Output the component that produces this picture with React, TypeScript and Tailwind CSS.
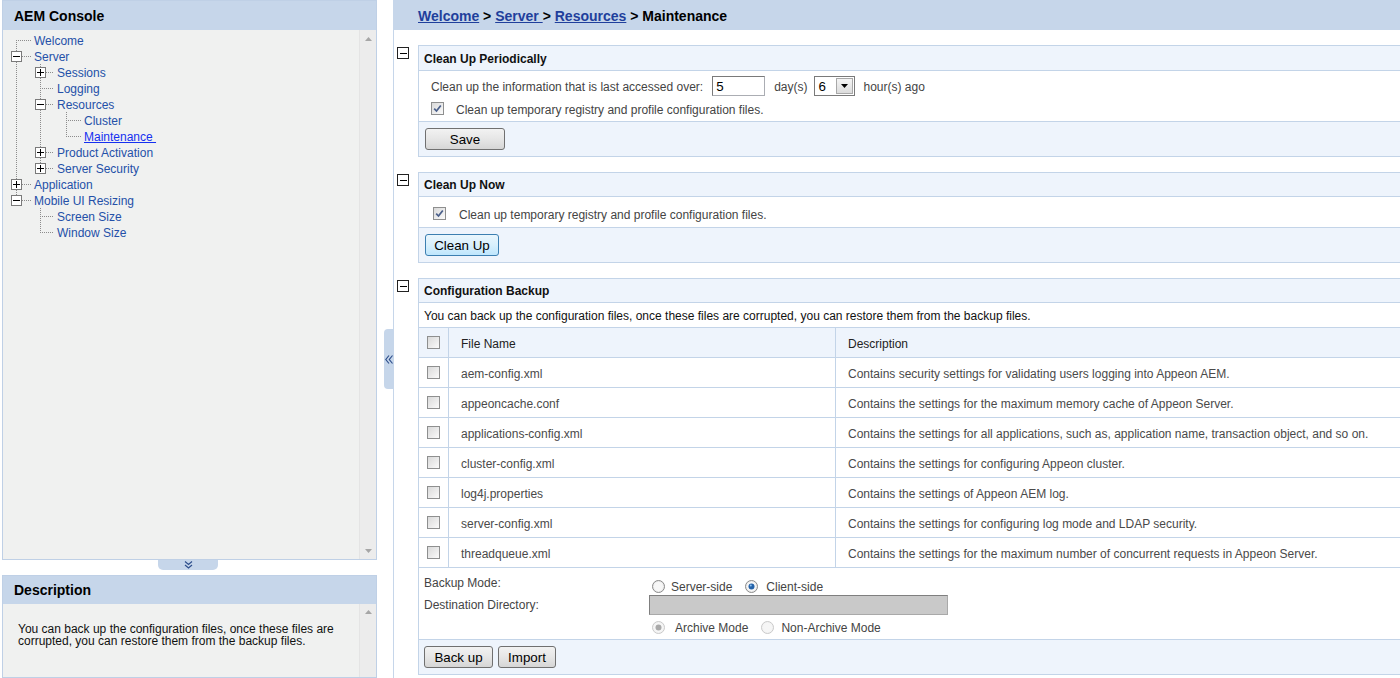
import React from 'react';

type Node = {
  label: string;
  level: number;
  toggle: '+' | '-' | null;
  last: boolean;
  guides: boolean[];
  first?: boolean;
  active?: boolean;
};

const TREE: Node[] = [
  { label: 'Welcome', level: 0, toggle: null, last: false, guides: [], first: true },
  { label: 'Server', level: 0, toggle: '-', last: false, guides: [] },
  { label: 'Sessions', level: 1, toggle: '+', last: false, guides: [true] },
  { label: 'Logging', level: 1, toggle: null, last: false, guides: [true] },
  { label: 'Resources', level: 1, toggle: '-', last: false, guides: [true] },
  { label: 'Cluster', level: 2, toggle: null, last: false, guides: [true, true] },
  { label: 'Maintenance ', level: 2, toggle: null, last: true, guides: [true, true], active: true },
  { label: 'Product Activation', level: 1, toggle: '+', last: false, guides: [true] },
  { label: 'Server Security', level: 1, toggle: '+', last: true, guides: [true] },
  { label: 'Application', level: 0, toggle: '+', last: false, guides: [] },
  { label: 'Mobile UI Resizing', level: 0, toggle: '-', last: true, guides: [] },
  { label: 'Screen Size', level: 1, toggle: null, last: false, guides: [false] },
  { label: 'Window Size', level: 1, toggle: null, last: true, guides: [false] },
];

const CX = [13, 37, 63];
const TX = [31, 54, 81];
const DOT = '#8c8c8c';

function TreeRow({ n }: { n: Node }) {
  const w = TX[n.level];
  const c = CX[n.level];
  return (
    <div className="flex h-[16px] items-center">
      <svg width={w} height={16} className="shrink-0" shapeRendering="crispEdges">
        {n.guides.map((g, i) =>
          g ? (
            <line key={i} x1={CX[i] + 0.5} y1={0} x2={CX[i] + 0.5} y2={16} stroke={DOT} strokeDasharray="1 1" />
          ) : null
        )}
        <line x1={c + 0.5} y1={n.first ? 8 : 0} x2={c + 0.5} y2={n.last ? 8 : 16} stroke={DOT} strokeDasharray="1 1" />
        <line x1={c} y1={8.5} x2={w - 3} y2={8.5} stroke={DOT} strokeDasharray="1 1" />
        {n.toggle && (
          <g>
            <rect x={c - 5 + 0.5} y={3.5} width={10} height={10} fill="#ffffff" stroke="#7a7a7a" />
            <line x1={c - 3} y1={8.5} x2={c + 4} y2={8.5} stroke="#000" />
            {n.toggle === '+' && <line x1={c + 0.5} y1={5} x2={c + 0.5} y2={12} stroke="#000" />}
          </g>
        )}
      </svg>
      <span
        className={
          n.active
            ? 'whitespace-pre pt-[1px] leading-[16px] text-[#1530f0] underline'
            : 'whitespace-pre pt-[1px] leading-[16px] text-[#2450a8]'
        }
      >
        {n.label}
      </span>
    </div>
  );
}

function Scrollbar({ down }: { down: boolean }) {
  return (
    <div className="flex w-[17px] shrink-0 flex-col items-center justify-between border-l border-[#e4e4e4] bg-[#ececec] pb-[6px] pt-[7px]">
      <svg width="7" height="4" viewBox="0 0 7 4">
        <path d="M0 4 L3.5 0 L7 4 Z" fill="#a6a6a6" />
      </svg>
      {down && (
        <svg width="7" height="4" viewBox="0 0 7 4">
          <path d="M0 0 L3.5 4 L7 0 Z" fill="#a6a6a6" />
        </svg>
      )}
    </div>
  );
}

function MinusBox() {
  return (
    <svg width="12" height="12" viewBox="0 0 12 12" shapeRendering="crispEdges">
      <rect x="0.5" y="0.5" width="11" height="11" fill="#fff" stroke="#222" />
      <line x1="3" y1="6.5" x2="10" y2="6.5" stroke="#000" />
    </svg>
  );
}

function Check({ checked = false }: { checked?: boolean }) {
  return (
    <span className="inline-flex h-[13px] w-[13px] shrink-0 items-center justify-center border border-[#8e8f8f] bg-gradient-to-br from-[#d9d9d9] to-[#fbfbfb]">
      {checked && (
        <svg width="9" height="9" viewBox="0 0 9 9">
          <path d="M1.2 4.6 L3.5 7 L7.8 1.4" stroke="#4a5f8a" strokeWidth="1.7" fill="none" />
        </svg>
      )}
    </span>
  );
}

function Radio({ checked = false, disabled = false }: { checked?: boolean; disabled?: boolean }) {
  return (
    <svg width="13" height="13" viewBox="0 0 13 13" className="shrink-0">
      <circle cx="6.5" cy="6.5" r="6" fill={disabled ? '#f3f3f3' : '#ececec'} stroke={disabled ? '#c9c9c9' : '#8a8a8a'} />
      <circle cx="6.5" cy="6.5" r="4.5" fill={disabled ? '#f6f6f6' : '#f7f7f7'} />
      {checked && <circle cx="6.5" cy="6.5" r="3" fill={disabled ? '#a9a9a9' : '#2462a8'} />}
      {checked && !disabled && <circle cx="5.8" cy="5.6" r="1" fill="#8ec0ef" />}
    </svg>
  );
}

function Section({ title, tall = false, children }: { title: string; tall?: boolean; children: React.ReactNode }) {
  return (
    <div className="flex">
      <div className="w-[24px] shrink-0 pl-[3px] pt-[2px]">
        <MinusBox />
      </div>
      <div className="-mr-[6px] flex-1 border border-[#c3d4e8]">
        <div
          className={
            tall
              ? 'flex h-[25px] items-center border-b border-[#c3d4e8] bg-[#eef4fc] pl-[5px] pt-[2px] font-bold text-[#111]'
              : 'flex h-[24px] items-center border-b border-[#c3d4e8] bg-[#eef4fc] pl-[5px] pt-[1px] font-bold text-[#111]'
          }
        >
          {title}
        </div>
        {children}
      </div>
    </div>
  );
}

function Btn({ label, w, focus = false }: { label: string; w: string; focus?: boolean }) {
  return (
    <button
      className={
        focus
          ? `flex h-[22px] ${w} items-center justify-center rounded-[3px] border border-[#3c7fb1] bg-gradient-to-b from-[#eaf6fd] via-[#d9f0fc] to-[#bee6fd] pt-[1px] text-[13.33px] text-black`
          : `flex h-[22px] ${w} items-center justify-center rounded-[3px] border border-[#707070] bg-gradient-to-b from-[#f2f2f2] via-[#e6e6e6] to-[#d6d6d6] pt-[1px] text-[13.33px] text-black`
      }
    >
      {label}
    </button>
  );
}

const FILES: [string, string][] = [
  ['aem-config.xml', 'Contains security settings for validating users logging into Appeon AEM.'],
  ['appeoncache.conf', 'Contains the settings for the maximum memory cache of Appeon Server.'],
  ['applications-config.xml', 'Contains the settings for all applications, such as, application name, transaction object, and so on.'],
  ['cluster-config.xml', 'Contains the settings for configuring Appeon cluster.'],
  ['log4j.properties', 'Contains the settings of Appeon AEM log.'],
  ['server-config.xml', 'Contains the settings for configuring log mode and LDAP security.'],
  ['threadqueue.xml', 'Contains the settings for the maximum number of concurrent requests in Appeon Server.'],
];

export default function App() {
  return (
    <div className="flex h-[678px] w-[1400px] overflow-hidden bg-white font-['Liberation_Sans',Arial,sans-serif] text-[12px]">
      {/* Left column */}
      <div className="ml-[2px] flex w-[375px] shrink-0 flex-col">
        <div className="flex h-[560px] flex-col border border-[#bfd0e6]">
          <div className="flex h-[29px] shrink-0 items-center bg-[#c6d6ea] pl-[11px] pt-[1px] text-[14px] font-bold text-black">
            AEM Console
          </div>
          <div className="flex min-h-0 flex-1">
            <div className="flex-1 bg-[#f0f1f0] pt-[2px]">
              {TREE.map((n, i) => (
                <TreeRow key={i} n={n} />
              ))}
            </div>
            <Scrollbar down={true} />
          </div>
        </div>
        <div className="ml-[156px] flex h-[10px] w-[60px] items-center justify-center rounded-b-[5px] bg-[#c6d6ea]">
          <svg width="9" height="8" viewBox="0 0 9 8">
            <path d="M1 0.5 L4.5 3.5 L8 0.5 M1 4 L4.5 7 L8 4" stroke="#2e4f8c" strokeWidth="1.2" fill="none" />
          </svg>
        </div>
        <div className="mt-[5px] flex flex-1 flex-col border border-[#bfd0e6]">
          <div className="flex h-[28px] shrink-0 items-center bg-[#c6d6ea] pl-[11px] text-[14px] font-bold text-black">
            Description
          </div>
          <div className="flex flex-1">
            <div className="flex-1 bg-[#f0f1f0] pl-[15px] pt-[19px] leading-[12px] text-[#111]">
              You can back up the configuration files, once these files are
              <br />
              corrupted, you can restore them from the backup files.
            </div>
            <div className="flex w-[17px] shrink-0 flex-col items-center border-l border-[#e4e4e4] bg-[#ececec] pt-[6px]">
              <svg width="7" height="4" viewBox="0 0 7 4">
                <path d="M0 4 L3.5 0 L7 4 Z" fill="#a6a6a6" />
              </svg>
            </div>
          </div>
        </div>
      </div>

      {/* Splitter */}
      <div className="w-[16px] shrink-0">
        <div className="ml-[7px] mt-[329px] flex h-[60px] w-[9px] items-center justify-center rounded-l-[4px] bg-[#c6d6ea]">
          <svg width="8" height="9" viewBox="0 0 8 9">
            <path d="M4 0.5 L0.8 4.5 L4 8.5 M7.5 0.5 L4.3 4.5 L7.5 8.5" stroke="#2e4f8c" strokeWidth="1.2" fill="none" />
          </svg>
        </div>
      </div>

      {/* Right panel */}
      <div className="flex min-w-0 flex-1 flex-col overflow-hidden border-l border-[#c6d6ea]">
        <div className="flex h-[30px] shrink-0 items-center bg-[#c6d6ea] pl-[24px] pt-[2px] text-[14px] font-bold text-black">
          <span className="whitespace-pre">
            <span className="text-[#1f3f9c] underline">Welcome</span>
            {' > '}
            <span className="text-[#1f3f9c] underline">Server </span>
            {'> '}
            <span className="text-[#1f3f9c] underline">Resources</span>
            {' > Maintenance'}
          </span>
        </div>

        <div className="flex flex-col pt-[15px]">
          {/* Clean Up Periodically */}
          <Section title="Clean Up Periodically" tall>
            <div className="pt-[5px] text-[#444]">
              <div className="flex h-[20px] items-center pl-[12px]">
                <span className="pt-[2px]">Clean up the information that is last accessed over:</span>
                <div className="ml-[9px] flex h-[20px] w-[53px] items-center border border-[#abadb3] border-l-[#7a7a7a] border-t-[#7a7a7a] bg-white pl-[3px] pt-[1px] text-[13.33px] text-black">
                  5
                </div>
                <span className="ml-[9px] pt-[2px]">day(s)</span>
                <div className="ml-[6px] flex h-[20px] w-[41px] items-center justify-between border border-[#7a7a7a] bg-white pl-[4px] pr-[1px] text-[13.33px] text-black">
                  <span className="pt-[1px]">6</span>
                  <span className="flex h-[16px] w-[17px] items-center justify-center border border-[#a8a8a8] bg-gradient-to-b from-[#f4f4f4] to-[#dcdcdc]">
                    <svg width="7" height="4" viewBox="0 0 7 4">
                      <path d="M0 0 L3.5 4 L7 0 Z" fill="#000" />
                    </svg>
                  </span>
                </div>
                <span className="ml-[9px] pt-[2px]">hour(s) ago</span>
              </div>
              <div className="flex h-[25px] items-center pl-[12px]">
                <Check checked />
                <span className="ml-[12px] pt-[2px]">Clean up temporary registry and profile configuration files.</span>
              </div>
            </div>
            <div className="h-[35px] border-t border-[#c3d4e8] bg-[#eef4fc] pl-[6px] pt-[6px]">
              <Btn label="Save" w="w-[80px]" />
            </div>
          </Section>

          <div className="h-[15px]" />

          {/* Clean Up Now */}
          <Section title="Clean Up Now">
            <div className="flex h-[30px] items-center pl-[14px] pt-[3px] text-[#444]">
              <Check checked />
              <span className="ml-[13px] pt-[2px]">Clean up temporary registry and profile configuration files.</span>
            </div>
            <div className="h-[35px] border-t border-[#c3d4e8] bg-[#eef4fc] pl-[6px] pt-[6px]">
              <Btn label="Clean Up" w="w-[74px]" focus />
            </div>
          </Section>

          <div className="h-[15px]" />

          {/* Configuration Backup */}
          <Section title="Configuration Backup">
            <div className="flex h-[25px] items-center border-b border-[#c3d4e8] pl-[5px] pt-[2px] text-[#111]">
              You can back up the configuration files, once these files are corrupted, you can restore them from the backup files.
            </div>
            <div className="flex h-[30px] border-b border-[#c3d4e8] bg-[#eef4fc] text-[#222]">
              <div className="flex w-[30px] shrink-0 items-center justify-center border-r border-[#c3d4e8]">
                <Check />
              </div>
              <div className="flex w-[387px] shrink-0 items-center border-r border-[#c3d4e8] pl-[12px] pt-[2px]">File Name</div>
              <div className="flex flex-1 items-center pl-[12px] pt-[2px]">Description</div>
            </div>
            {FILES.map(([f, d]) => (
              <div key={f} className="flex h-[30px] border-b border-[#c3d4e8] text-[#4a4a4a]">
                <div className="flex w-[30px] shrink-0 items-center justify-center border-r border-[#c3d4e8]">
                  <Check />
                </div>
                <div className="flex w-[387px] shrink-0 items-center border-r border-[#c3d4e8] pl-[12px] pt-[2px]">{f}</div>
                <div className="flex flex-1 items-center whitespace-nowrap pl-[12px] pt-[2px]">{d}</div>
              </div>
            ))}
            <div className="pb-[1px] pl-[5px] pt-[8px] text-[#444]">
              <div className="flex h-[19px]">
                <div className="w-[225px] shrink-0 leading-[14px]">Backup Mode:</div>
                <div className="flex items-center pt-[2px]">
                  <span className="ml-[3px]"><Radio /></span>
                  <span className="ml-[6px] pt-[1px]">Server-side</span>
                  <span className="ml-[13px]"><Radio checked /></span>
                  <span className="ml-[8px] pt-[1px]">Client-side</span>
                </div>
              </div>
              <div className="flex h-[20px]">
                <div className="w-[225px] shrink-0 pt-[3px] leading-[14px]">Destination Directory:</div>
                <div className="h-[20px] w-[299px] border border-[#a9a9a9] border-l-[#7f7f7f] border-t-[#7f7f7f] bg-[#c9c9c9]" />
              </div>
              <div className="flex h-[23px] items-center pt-[2px]">
                <div className="w-[225px] shrink-0" />
                <span className="ml-[3px]"><Radio checked disabled /></span>
                <span className="ml-[10px] pt-[1px]">Archive Mode</span>
                <span className="ml-[13px]"><Radio disabled /></span>
                <span className="ml-[7px] pt-[1px]">Non-Archive Mode</span>
              </div>
            </div>
            <div className="flex h-[35px] gap-[5px] border-t border-[#c3d4e8] bg-[#eef4fc] pl-[5px] pt-[6px]">
              <Btn label="Back up" w="w-[69px]" />
              <Btn label="Import" w="w-[58px]" />
            </div>
          </Section>
        </div>
      </div>
    </div>
  );
}
